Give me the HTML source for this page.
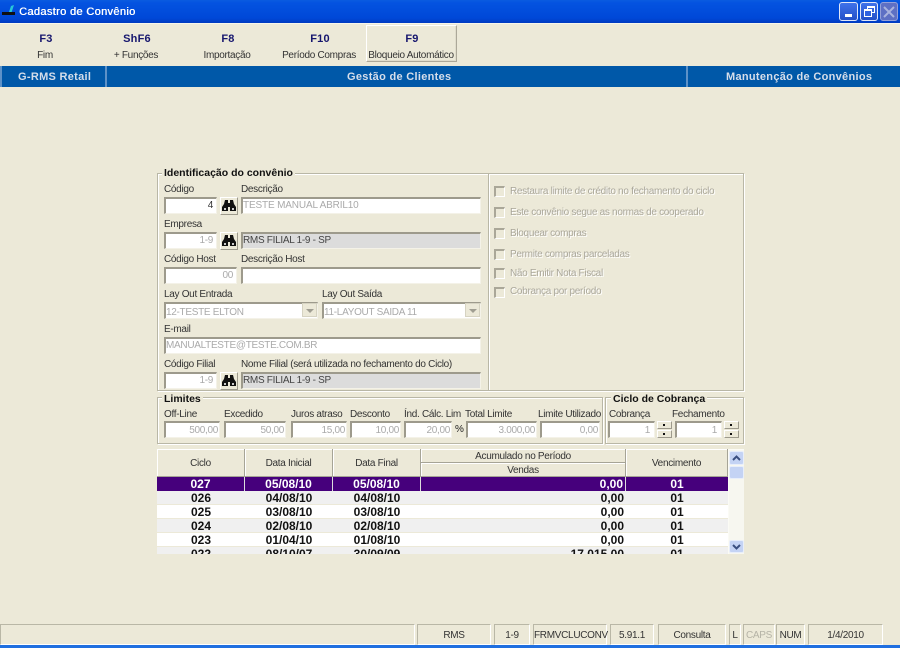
<!DOCTYPE html>
<html><head><meta charset="utf-8"><title>Cadastro de Convênio</title>
<style>
html,body{margin:0;padding:0;width:900px;height:648px;overflow:hidden;background:#ece9d8}
body{position:relative;font:10px/12px "Liberation Sans",sans-serif;color:#333;letter-spacing:-.3px}
div,span{position:absolute;box-sizing:border-box;white-space:nowrap}
.i{height:17px;background:#fff;border:1px solid #fff;border-top:2px solid #9d9a8c;border-left:2px solid #9d9a8c;border-right-color:#f4f2e8;border-bottom-color:#f4f2e8;color:#aaa;line-height:13px;padding:0;overflow:hidden}
.r{text-align:right}
.n{padding:1px 1px 0 0}
.g{background:#dcdcdc;color:#444}
.b{width:18px;height:18px;background:#ece9d8;border:1px solid;border-color:#fff #9d9a8c #9d9a8c #fff}
.gb{border:1px solid #b9b7a6;box-shadow:inset 1px 1px 0 #fff,1px 1px 0 #fff}
.gt{font-weight:bold;font-size:10.500px;color:#111;background:#ece9d8;padding:0 2px;line-height:12px;letter-spacing:0}
.k{font-weight:bold;font-size:11px;color:#16166e;text-align:center;top:33px;letter-spacing:.2px}
.l{top:50px;text-align:center;color:#333}
.bt{top:70px;font-weight:bold;font-size:11px;color:#d6deea;letter-spacing:.3px;line-height:14px}
.sep{top:66px;width:2px;height:21px;background:#0058a8;border:1px solid #5d92c8;border-width:0 1px}
.cb{left:494px;width:11px;height:11px;background:#ece9d8;border:1px solid;border-color:#aaa798 #fff #fff #aaa798;border-width:2px 1px 1px 2px}
.ct{left:510px;color:#aaa79a;text-shadow:1px 1px 0 #fff}
.h{background:#ece9d8;border-right:1px solid #a6a496;border-bottom:1px solid #a6a496;box-shadow:inset 1px 1px 0 #fff;text-align:center;color:#333}
.row{left:157px;width:571px;height:14px;border-bottom:1px solid #ece9d8;font:bold 12px/15px "Liberation Sans",sans-serif;color:#111;letter-spacing:0}
.row span{top:0;text-align:center;height:13px}
.c1{left:0;width:88px}.c2{left:88px;width:88px}.c3{left:176px;width:88px}.c4{left:264px;width:205px;text-align:right!important;padding-right:2px}.c5{left:469px;width:102px}
.p{background:#46007c;color:#fff;border-bottom:0}
.p span{border-right:1px solid #ddd;height:14px}
.a{background:#f0f0f0}.w{background:#fff}
.s{top:624px;height:21px;border:1px solid;border-color:#b9b7a6 #fff #fff #b9b7a6;text-align:center;line-height:21px;color:#333}
.sp{width:15px;height:8px;background:#ece9d8;border:1px solid;border-color:#fff #9d9a8c #9d9a8c #fff}
.sp:after{content:"";position:absolute;left:5px;top:2px;width:2px;height:2px;background:#111}
</style></head><body>

<div style="left:0;top:0;width:900px;height:23px;background:linear-gradient(#0a5be0 0,#0453e0 3px,#0048d8 18px,#003ac0 23px)"></div>
<div style="left:0;top:23px;width:900px;height:1px;background:#f7f5ea"></div>
<svg style="position:absolute;left:2px;top:4px" width="14" height="14" viewBox="0 0 14 14"><path d="M6 11 L9 2 L12 1 L9 10Z" fill="#27c8d8"/><rect x="0" y="8" width="13" height="3" fill="#111"/></svg>
<div style="left:19px;top:6px;font-size:11px;line-height:13px;color:#fff;letter-spacing:.35px;text-shadow:.4px 0 0 #fff">Cadastro de Convênio</div>

<div style="left:839px;top:2px;width:19px;height:19px;background:linear-gradient(#3f72ea,#2450c8);border:1px solid #dfe6f8;border-radius:3px"><span style="left:5px;top:11px;width:7px;height:3px;background:#fff"></span></div>
<div style="left:860px;top:2px;width:18px;height:19px;background:linear-gradient(#3f72ea,#2450c8);border:1px solid #dfe6f8;border-radius:3px"><span style="left:6px;top:3px;width:8px;height:7px;border:1px solid #fff;border-top-width:2px"></span><span style="left:3px;top:6px;width:8px;height:8px;border:1px solid #fff;border-top-width:2px;background:#2f62e0"></span></div>
<div style="left:880px;top:2px;width:18px;height:19px;background:#5e70c4;border:1px solid #94a0d8;border-radius:3px;overflow:hidden"><svg style="position:absolute;left:2px;top:3px" width="12" height="12" viewBox="0 0 12 12"><path d="M1 1L11 11M11 1L1 11" stroke="#a9b3de" stroke-width="2"/></svg></div>

<div style="left:366px;top:25px;width:91px;height:37px;border:1px solid;border-color:#fff #aca899 #aca899 #fff;box-shadow:inset -1px -1px 0 #e0ddcc"></div>
<div class="k" style="left:6px;width:80px">F3</div><div class="l" style="left:6px;width:78px">Fim</div>
<div class="k" style="left:97px;width:80px">ShF6</div><div class="l" style="left:96px;width:80px">+ Funções</div>
<div class="k" style="left:188px;width:80px">F8</div><div class="l" style="left:187px;width:80px">Importação</div>
<div class="k" style="left:280px;width:80px">F10</div><div class="l" style="left:279px;width:80px">Período Compras</div>
<div class="k" style="left:372px;width:80px">F9</div><div class="l" style="left:368px;width:86px">Bloqueio Automático</div>

<div style="left:0;top:66px;width:900px;height:21px;background:#0058a8"></div>
<div class="sep" style="left:0"></div><div class="sep" style="left:105px"></div><div class="sep" style="left:686px"></div>
<div class="bt" style="left:18px">G-RMS Retail</div>
<div class="bt" style="left:347px">Gestão de Clientes</div>
<div class="bt" style="left:726px">Manutenção de Convênios</div>

<div class="gb" style="left:157px;top:173px;width:587px;height:218px"></div>
<div class="gb" style="left:488px;top:173px;width:256px;height:218px"></div>
<div class="gt" style="left:162px;top:167px">Identificação do convênio</div>

<div style="left:164px;top:184px">Código</div><div style="left:241px;top:184px">Descrição</div>
<div class="i r" style="left:164px;top:197px;width:53px;color:#333;padding-right:3px">4</div>
<div class="b" style="left:220px;top:197px"><svg style="position:absolute;left:1px;top:1px" width="14" height="13" viewBox="0 0 14 13"><path d="M2 5L3 1h3v3h2V1h3l1 4 2 3v4H8V8H6v4H0V8z" fill="#111"/><path d="M2 9h2v2H2zM10 9h2v2h-2z" fill="#ccc"/></svg></div>
<div class="i" style="left:241px;top:197px;width:240px;letter-spacing:-.15px">TESTE MANUAL ABRIL10</div>

<div style="left:164px;top:219px">Empresa</div>
<div class="i r" style="left:164px;top:232px;width:53px;padding-right:3px">1-9</div>
<div class="b" style="left:220px;top:232px"><svg style="position:absolute;left:1px;top:1px" width="14" height="13" viewBox="0 0 14 13"><path d="M2 5L3 1h3v3h2V1h3l1 4 2 3v4H8V8H6v4H0V8z" fill="#111"/><path d="M2 9h2v2H2zM10 9h2v2h-2z" fill="#ccc"/></svg></div>
<div class="i g" style="left:241px;top:232px;width:240px">RMS FILIAL 1-9 - SP</div>

<div style="left:164px;top:254px">Código Host</div><div style="left:241px;top:254px">Descrição Host</div>
<div class="i r" style="left:164px;top:267px;width:73px;padding-right:3px">00</div>
<div class="i" style="left:241px;top:267px;width:240px"></div>

<div style="left:164px;top:289px">Lay Out Entrada</div><div style="left:322px;top:289px">Lay Out Saída</div>
<div class="i" style="left:164px;top:302px;width:154px;padding-top:2px">12-TESTE ELTON</div>
<div style="left:302px;top:303px;width:15px;height:14px;background:#ece9d8;border:1px solid #d6d3c2"><span style="left:3px;top:5px;border:4px solid transparent;border-top-color:#a09e92;border-bottom:0"></span></div>
<div class="i" style="left:322px;top:302px;width:159px;padding-top:2px">11-LAYOUT SAIDA 11</div>
<div style="left:465px;top:303px;width:15px;height:14px;background:#ece9d8;border:1px solid #d6d3c2"><span style="left:3px;top:5px;border:4px solid transparent;border-top-color:#a09e92;border-bottom:0"></span></div>

<div style="left:164px;top:324px">E-mail</div>
<div class="i" style="left:164px;top:337px;width:317px">MANUALTESTE@TESTE.COM.BR</div>

<div style="left:164px;top:359px">Código Filial</div><div style="left:241px;top:359px">Nome Filial (será utilizada no fechamento do Ciclo)</div>
<div class="i r" style="left:164px;top:372px;width:53px;padding-right:3px">1-9</div>
<div class="b" style="left:220px;top:372px"><svg style="position:absolute;left:1px;top:1px" width="14" height="13" viewBox="0 0 14 13"><path d="M2 5L3 1h3v3h2V1h3l1 4 2 3v4H8V8H6v4H0V8z" fill="#111"/><path d="M2 9h2v2H2zM10 9h2v2h-2z" fill="#ccc"/></svg></div>
<div class="i g" style="left:241px;top:372px;width:240px">RMS FILIAL 1-9 - SP</div>

<div class="cb" style="top:186px"></div><div class="ct" style="top:186px">Restaura limite de crédito no fechamento do ciclo</div>
<div class="cb" style="top:207px"></div><div class="ct" style="top:207px">Este convênio segue as normas de cooperado</div>
<div class="cb" style="top:228px"></div><div class="ct" style="top:228px">Bloquear compras</div>
<div class="cb" style="top:249px"></div><div class="ct" style="top:249px">Permite compras parceladas</div>
<div class="cb" style="top:268px"></div><div class="ct" style="top:268px">Não Emitir Nota Fiscal</div>
<div class="cb" style="top:287px"></div><div class="ct" style="top:286px">Cobrança por período</div>

<div class="gb" style="left:157px;top:397px;width:446px;height:47px"></div>
<div class="gt" style="left:162px;top:393px">Limites</div>
<div style="left:164px;top:409px">Off-Line</div>
<div style="left:224px;top:409px">Excedido</div>
<div style="left:291px;top:409px">Juros atraso</div>
<div style="left:350px;top:409px">Desconto</div>
<div style="left:404px;top:409px">Índ. Cálc. Lim</div>
<div style="left:465px;top:409px">Total Limite</div>
<div style="left:538px;top:409px">Limite Utilizado</div>
<div class="i r n" style="left:164px;top:421px;width:56px">500,00</div>
<div class="i r n" style="left:224px;top:421px;width:62px">50,00</div>
<div class="i r n" style="left:291px;top:421px;width:56px">15,00</div>
<div class="i r n" style="left:350px;top:421px;width:51px">10,00</div>
<div class="i r n" style="left:404px;top:421px;width:48px">20,00</div>
<div style="left:455px;top:424px;color:#222">%</div>
<div class="i r n" style="left:466px;top:421px;width:71px">3.000,00</div>
<div class="i r n" style="left:540px;top:421px;width:60px">0,00</div>

<div class="gb" style="left:605px;top:397px;width:139px;height:47px"></div>
<div class="gt" style="left:611px;top:393px">Ciclo de Cobrança</div>
<div style="left:609px;top:409px">Cobrança</div>
<div style="left:672px;top:409px">Fechamento</div>
<div class="i r n" style="left:608px;top:421px;width:47px;padding-right:4px">1</div>
<div class="sp" style="left:657px;top:421px"></div><div class="sp" style="left:657px;top:430px"></div>
<div class="i r n" style="left:675px;top:421px;width:47px;padding-right:4px">1</div>
<div class="sp" style="left:724px;top:421px"></div><div class="sp" style="left:724px;top:430px"></div>

<div style="left:157px;top:449px;width:587px;height:105px;background:#fbfbf5;overflow:hidden"></div>
<div class="h" style="left:157px;top:449px;width:88px;height:28px;line-height:30px">Ciclo</div>
<div class="h" style="left:245px;top:449px;width:88px;height:28px;line-height:30px">Data Inicial</div>
<div class="h" style="left:333px;top:449px;width:88px;height:28px;line-height:30px">Data Final</div>
<div class="h" style="left:421px;top:449px;width:205px;height:14px;line-height:16px">Acumulado no Período</div>
<div class="h" style="left:421px;top:463px;width:205px;height:14px;line-height:16px">Vendas</div>
<div class="h" style="left:626px;top:449px;width:102px;height:28px;line-height:30px">Vencimento</div>

<div class="row p" style="top:477px"><span class="c1">027</span><span class="c2">05/08/10</span><span class="c3">05/08/10</span><span class="c4">0,00</span><span class="c5" style="border:0">01</span></div>
<div class="row a" style="top:491px"><span class="c1">026</span><span class="c2">04/08/10</span><span class="c3">04/08/10</span><span class="c4">0,00</span><span class="c5">01</span></div>
<div class="row w" style="top:505px"><span class="c1">025</span><span class="c2">03/08/10</span><span class="c3">03/08/10</span><span class="c4">0,00</span><span class="c5">01</span></div>
<div class="row a" style="top:519px"><span class="c1">024</span><span class="c2">02/08/10</span><span class="c3">02/08/10</span><span class="c4">0,00</span><span class="c5">01</span></div>
<div class="row w" style="top:533px"><span class="c1">023</span><span class="c2">01/04/10</span><span class="c3">01/08/10</span><span class="c4">0,00</span><span class="c5">01</span></div>
<div class="row a" style="top:547px;height:7px;overflow:hidden;border:0"><span class="c1">022</span><span class="c2">08/10/07</span><span class="c3">30/09/09</span><span class="c4">17.015,00</span><span class="c5">01</span></div>

<div style="left:729px;top:450px;width:15px;height:104px;background:#f7f7f0"></div>
<div style="left:729px;top:451px;width:15px;height:14px;background:#c4d3f4;border:1px solid #e8eefa;border-radius:2px"><svg style="position:absolute;left:2px;top:2px" width="9" height="8"><path d="M1 6L4.500 2.500L8 6" fill="none" stroke="#3a4f80" stroke-width="2"/></svg></div>
<div style="left:729px;top:466px;width:15px;height:13px;background:#c4d3f4;border:1px solid #e8eefa;border-radius:2px"></div>
<div style="left:729px;top:540px;width:15px;height:13px;background:#c4d3f4;border:1px solid #e8eefa;border-radius:2px"><svg style="position:absolute;left:2px;top:2px" width="9" height="8"><path d="M1 2L4.500 5.500L8 2" fill="none" stroke="#3a4f80" stroke-width="2"/></svg></div>

<div class="s" style="left:0;width:415px"></div>
<div class="s" style="left:417px;width:74px">RMS</div>
<div class="s" style="left:494px;width:36px">1-9</div>
<div class="s" style="left:533px;width:74px">FRMVCLUCONV</div>
<div class="s" style="left:610px;width:44px">5.91.1</div>
<div class="s" style="left:658px;width:68px">Consulta</div>
<div class="s" style="left:729px;width:12px">L</div>
<div class="s" style="left:743px;width:32px;color:#b5b3a6">CAPS</div>
<div class="s" style="left:776px;width:29px">NUM</div>
<div class="s" style="left:808px;width:75px">1/4/2010</div>
<div style="left:0;top:645px;width:900px;height:3px;background:#1f6fe0"></div>
</body></html>
